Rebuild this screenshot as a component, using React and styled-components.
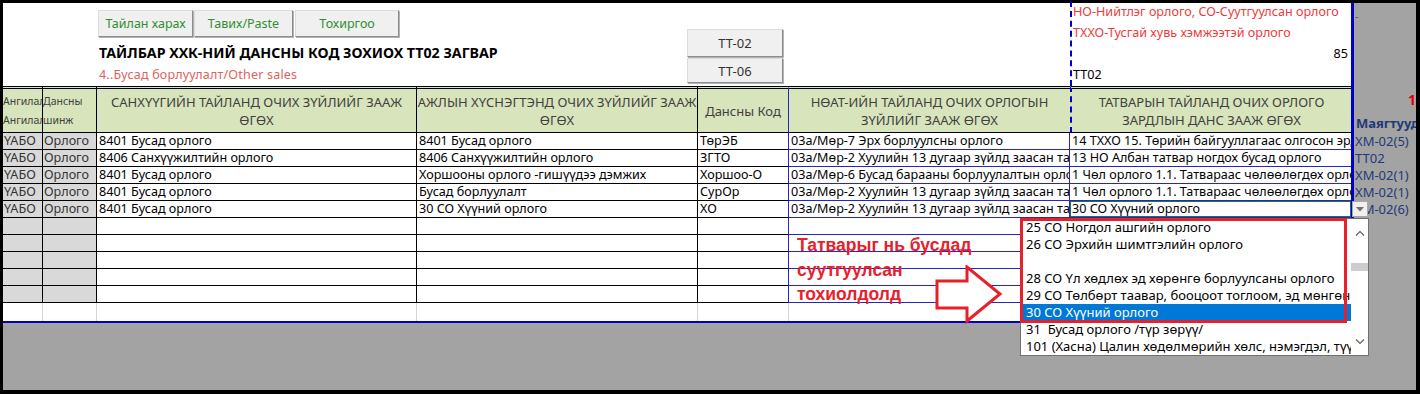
import React from 'react';
import styled, { createGlobalStyle } from 'styled-components';

const COLS = '40px 54px 320px 281px 91px 281px 281px 3px 62px';
const FONT = `"Noto Sans", "Liberation Sans", sans-serif`;
const BLUE = '#0000cd';
const CELL_BLUE = '#2626c8';
const GRAY = '#a3a3a3';
const RED = '#e8202a';
const NAVY = '#1f3a78';

const GlobalStyle = createGlobalStyle`
  html, body {
    margin: 0;
    padding: 0;
    background: #000;
  }
  body {
    font-family: ${FONT};
  }
`;

const Frame = styled.div`
  position: relative;
  width: 1420px;
  height: 394px;
  box-sizing: border-box;
  padding: 3px 4px 4px 3px;
  background: #000;
  overflow: hidden;
`;

const Sheet = styled.div`
  display: flex;
  flex-direction: column;
  height: 100%;
  background: ${GRAY};
`;

const Band = styled.div`
  display: grid;
  grid-template-columns: ${COLS};
  height: ${(p) => p.$h}px;
  background: ${(p) => p.$bg || 'transparent'};
`;

const Filler = styled.div`
  flex: 1;
  background: ${GRAY};
`;

const Span = styled.div`
  grid-column: span ${(p) => p.$span || 1};
`;

const BlueBar = styled.div`
  background: ${BLUE};
`;

const Rule = styled.div`
  grid-column: span 8;
  background: ${BLUE};
`;

/* ---------- top band ---------- */

const TitleCell = styled.div`
  padding-left: 1px;
  white-space: nowrap;
  overflow: visible;
`;

const ButtonBar = styled.div`
  display: flex;
  margin-top: 7px;
`;

const ToolButton = styled.button`
  box-sizing: border-box;
  height: 27px;
  width: ${(p) => p.$w}px;
  margin-left: ${(p) => p.$ml || 0}px;
  padding: 0;
  background: #f0f0f0;
  border: 1px solid;
  border-color: #dcdcdc #8c8c8c #8c8c8c #dcdcdc;
  box-shadow: 1px 1px 0 #b4b4b4;
  color: ${(p) => p.$color || '#333'};
  font-family: ${FONT};
  font-size: 12.5px;
`;

const Title = styled.div`
  margin-top: 7px;
  padding-left: 1px;
  font-size: 14.2px;
  line-height: 18px;
  font-weight: 700;
  color: #000;
`;

const Subtitle = styled.div`
  margin-top: 4px;
  padding-left: 1px;
  font-size: 12.5px;
  letter-spacing: 0.2px;
  line-height: 18px;
  color: #e0625c;
`;

const TemplateCell = styled.div`
  grid-column: span 2;
  display: flex;
  flex-direction: column;
  align-items: flex-end;
  padding: 26px 6px 0 0;
  gap: 1px;
`;

const TemplateButton = styled(ToolButton)`
  width: 96px;
  height: ${(p) => p.$h}px;
  font-size: 13px;
`;

const NoteCell = styled.div`
  border-left: 2px dashed ${BLUE};
  padding: 0 3px 0 1px;
  display: flex;
  flex-direction: column;
  margin-top: -2px;
  font-size: 12.6px;
  line-height: 21px;
  white-space: nowrap;
`;

const NoteLine = styled.div`
  height: 21px;
  color: ${(p) => (p.$red ? '#f03a3a' : '#000')};
  text-align: ${(p) => (p.$right ? 'right' : 'left')};
`;

/* ---------- header band ---------- */

const HeadCell = styled.div`
  box-sizing: border-box;
  background: #d8e4bc;
  border-top: 3px double #000;
  border-bottom: 1px solid #000;
  border-right: ${(p) => p.$right || '1px solid #000'};
  border-left: ${(p) => p.$left || 'none'};
  display: flex;
  align-items: center;
  justify-content: ${(p) => (p.$small ? 'flex-start' : 'center')};
  text-align: ${(p) => (p.$small ? 'left' : 'center')};
  color: #404040;
  font-size: ${(p) => (p.$small ? '10.5px' : '13px')};
  line-height: ${(p) => (p.$small ? '19px' : '18px')};
  padding: ${(p) => (p.$small ? '0' : '0 2px')};
  overflow: hidden;
  white-space: nowrap;
`;

const SideHead = styled.div`
  display: flex;
  flex-direction: column;
  padding-top: 6px;
  white-space: nowrap;
  overflow: hidden;
`;

const PageNo = styled.div`
  align-self: flex-end;
  color: #e00000;
  font-weight: 700;
  font-size: 14px;
  line-height: 16px;
`;

const SideTitle = styled.div`
  margin-top: 7px;
  padding-left: 2px;
  color: ${NAVY};
  font-weight: 700;
  font-size: 13px;
  line-height: 16px;
`;

/* ---------- body rows ---------- */

const Cell = styled.div`
  box-sizing: border-box;
  position: relative;
  overflow: hidden;
  white-space: nowrap;
  font-size: 12.6px;
  line-height: 16px;
  padding: 0 2px;
  color: #000;
  background: #fff;
  border-bottom: 1px solid ${(p) => p.$line || '#000'};
  border-right: ${(p) => (p.$noRight ? 'none' : `1px solid ${p.$rline || p.$line || '#000'}`)};
  box-shadow: ${(p) => (p.$sel ? 'inset 0 0 0 1px #217346' : 'none')};
`;

const ShadeCell = styled(Cell)`
  background: #d9d9d9;
  color: #333;
  padding: 0 1px;
`;

const GridCell = styled.div`
  background: #fff;
  border-right: ${(p) => (p.$grid ? '1px solid #d4d4d4' : 'none')};
`;

const SideCell = styled.div`
  background: ${GRAY};
  color: ${NAVY};
  font-size: 13px;
  line-height: 16px;
  padding-left: 1px;
  white-space: nowrap;
  overflow: hidden;
`;

const SideDash = styled.div`
  color: #555;
  font-size: 10px;
  line-height: 10px;
  padding-top: 8px;
`;

/* ---------- overlays ---------- */

const Callout = styled.div`
  position: absolute;
  left: 797px;
  top: 233px;
  color: ${RED};
  font-family: "Liberation Sans", Arial, sans-serif;
  font-weight: 700;
  font-size: 17.5px;
  line-height: 24.5px;
  white-space: nowrap;
`;

const ArrowSvg = styled.svg`
  position: absolute;
  left: 935px;
  top: 265px;
`;

const Dropdown = styled.div`
  position: absolute;
  left: 1020px;
  top: 218px;
  width: 349px;
  height: 138px;
  box-sizing: border-box;
  border: 1px solid #707070;
  background: #fff;
  display: flex;
`;

const OptionList = styled.ul`
  list-style: none;
  margin: 0;
  padding: 0;
  flex: 1;
  overflow: hidden;
`;

const Option = styled.li`
  height: 17px;
  line-height: 17px;
  padding-left: 5px;
  font-size: 13px;
  white-space: pre;
  overflow: hidden;
  background: ${(p) => (p.$sel ? '#0078d7' : 'transparent')};
  color: ${(p) => (p.$sel ? '#fff' : '#000')};
`;

const ScrollBar = styled.div`
  width: 17px;
  display: flex;
  flex-direction: column;
  align-items: center;
  background: #fff;
`;

const ScrollArrow = styled.div`
  height: ${(p) => p.$h}px;
  display: flex;
  align-items: center;
  justify-content: center;
`;

const Thumb = styled.div`
  width: 17px;
  height: 8px;
  margin-top: 16px;
  background: #cdcdcd;
`;

const Track = styled.div`
  flex: 1;
`;

const Marker = styled.div`
  position: absolute;
  left: 1020px;
  top: 218px;
  width: 327px;
  height: 105px;
  box-sizing: border-box;
  border: 3px solid ${RED};
`;

const DropButton = styled.div`
  position: absolute;
  left: 1352px;
  top: 201px;
  width: 16px;
  height: 16px;
  box-sizing: border-box;
  background: #f0f0f0;
  border: 1px solid #a8a8a8;
  display: flex;
  align-items: center;
  justify-content: center;
`;

const RESIDENT = '03а/Мөр-2 Хуулийн 13 дугаар зүйлд заасан татвар ногдох орлого';
const EXEMPT = '1 Чөл орлого 1.1. Татвараас чөлөөлөгдөх орлого';

const rows = [
  {
    c: '8401 Бусад орлого',
    d: '8401 Бусад орлого',
    e: 'ТөрЭБ',
    f: '03а/Мөр-7 Эрх борлуулсны орлого',
    g: '14 ТХХО 15. Төрийн байгууллагаас олгосон эрдэм шинжилгээний шагнал',
    side: 'ХМ-02(5)',
  },
  {
    c: '8406 Санхүүжилтийн орлого',
    d: '8406 Санхүүжилтийн орлого',
    e: 'ЗГТО',
    f: RESIDENT,
    g: '13 НО Албан татвар ногдох бусад орлого',
    side: 'ТТ02',
  },
  {
    c: '8401 Бусад орлого',
    d: 'Хоршооны орлого -гишүүдээ дэмжих',
    e: 'Хоршоо-О',
    f: '03а/Мөр-6 Бусад барааны борлуулалтын орлого',
    g: EXEMPT,
    side: 'ХМ-02(1)',
  },
  {
    c: '8401 Бусад орлого',
    d: 'Бусад борлуулалт',
    e: 'СурОр',
    f: RESIDENT,
    g: EXEMPT,
    side: 'ХМ-02(1)',
  },
  {
    c: '8401 Бусад орлого',
    d: '30 СО Хүүний орлого',
    e: 'ХО',
    f: RESIDENT,
    g: '30 СО Хүүний орлого',
    side: 'ХМ-02(6)',
    selected: true,
  },
];

const options = [
  '25 СО Ногдол ашгийн орлого',
  '26 СО Эрхийн шимтгэлийн орлого',
  '',
  '28 СО Үл хөдлөх эд хөрөнгө борлуулсаны орлого',
  '29 СО Төлбөрт таавар, бооцоот тоглоом, эд мөнгөний хонжвор',
  '30 СО Хүүний орлого',
  '31  Бусад орлого /түр зөрүү/',
  '101 (Хасна) Цалин хөдөлмөрийн хөлс, нэмэгдэл, түүнтэй адилтгах орлого',
];

const Chevron = ({ up }) => (
  <svg width="10" height="6" viewBox="0 0 10 6">
    <polyline
      points={up ? '1,5.5 5,1.5 9,5.5' : '1,0.5 5,4.5 9,0.5'}
      fill="none"
      stroke="#606060"
      strokeWidth="1.2"
    />
  </svg>
);

const DataRow = ({ row }) => (
  <Band $h={17}>
    <ShadeCell>{row ? 'ҮАБО' : ''}</ShadeCell>
    <ShadeCell>{row ? 'Орлого' : ''}</ShadeCell>
    <Cell>{row?.c}</Cell>
    <Cell>{row?.d}</Cell>
    <Cell $rline={CELL_BLUE}>{row?.e}</Cell>
    <Cell $line={CELL_BLUE}>{row?.f}</Cell>
    <Cell $line={CELL_BLUE} $noRight $sel={row?.selected}>
      {row?.g}
    </Cell>
    <BlueBar />
    <SideCell>{row?.side}</SideCell>
  </Band>
);

const App = () => {
  return (
    <>
      <GlobalStyle />
      <Frame>
        <Sheet>
          <Band $h={83} $bg="#fff">
            <Span $span={2} />
            <TitleCell>
              <ButtonBar>
                <ToolButton $w={95} $color="#2f8f2f">
                  Тайлан харах
                </ToolButton>
                <ToolButton $w={99} $ml={1} $color="#2f8f2f">
                  Тавих/Paste
                </ToolButton>
                <ToolButton $w={104} $ml={2} $color="#2f8f2f">
                  Тохиргоо
                </ToolButton>
              </ButtonBar>
              <Title>ТАЙЛБАР ХХК-НИЙ ДАНСНЫ КОД ЗОХИОХ ТТ02 ЗАГВАР</Title>
              <Subtitle>4..Бусад борлуулалт/Other sales</Subtitle>
            </TitleCell>
            <TemplateCell>
              <TemplateButton $h={28}>TT-02</TemplateButton>
              <TemplateButton $h={25}>TT-06</TemplateButton>
            </TemplateCell>
            <Span />
            <NoteCell>
              <NoteLine $red>НО-Нийтлэг орлого, СО-Суутгуулсан орлого</NoteLine>
              <NoteLine $red>ТХХО-Тусгай хувь хэмжээтэй орлого</NoteLine>
              <NoteLine $right>85</NoteLine>
              <NoteLine>TT02</NoteLine>
            </NoteCell>
            <BlueBar />
            <SideCell>
              <SideDash>-</SideDash>
            </SideCell>
          </Band>

          <Band $h={47}>
            <HeadCell $small>
              Ангилал
              <br />
              Ангилал
            </HeadCell>
            <HeadCell $small>
              Дансны
              <br />
              шинж
            </HeadCell>
            <HeadCell>
              САНХҮҮГИЙН ТАЙЛАНД ОЧИХ ЗҮЙЛИЙГ ЗААЖ
              <br />
              ӨГӨХ
            </HeadCell>
            <HeadCell>
              АЖЛЫН ХҮСНЭГТЭНД ОЧИХ ЗҮЙЛИЙГ ЗААЖ
              <br />
              ӨГӨХ
            </HeadCell>
            <HeadCell $right={`1px solid ${CELL_BLUE}`}>Дансны Код</HeadCell>
            <HeadCell $right="none">
              НӨАТ-ИЙН ТАЙЛАНД ОЧИХ ОРЛОГЫН
              <br />
              ЗҮЙЛИЙГ ЗААЖ ӨГӨХ
            </HeadCell>
            <HeadCell $right="none" $left={`2px dashed ${BLUE}`}>
              ТАТВАРЫН ТАЙЛАНД ОЧИХ ОРЛОГО
              <br />
              ЗАРДЛЫН ДАНС ЗААЖ ӨГӨХ
            </HeadCell>
            <BlueBar />
            <SideHead>
              <PageNo>1</PageNo>
              <SideTitle>Маягтууд</SideTitle>
            </SideHead>
          </Band>

          {rows.map((row, idx) => (
            <DataRow key={idx} row={row} />
          ))}
          {[0, 1, 2, 3, 4].map((idx) => (
            <DataRow key={`empty-${idx}`} />
          ))}

          <Band $h={18}>
            <GridCell $grid />
            <GridCell $grid />
            <GridCell $grid />
            <GridCell $grid />
            <GridCell $grid />
            <GridCell />
            <GridCell />
            <BlueBar />
            <SideCell />
          </Band>

          <Band $h={2}>
            <Rule />
            <SideCell />
          </Band>
          <Filler />
        </Sheet>

        <Callout>
          Татварыг нь бусдад
          <br />
          суутгуулсан
          <br />
          тохиолдолд
        </Callout>

        <ArrowSvg width="70" height="60" viewBox="0 0 70 60">
          <polygon
            points="2,16 32,16 32,2 65,29 32,56 32,43 2,43"
            fill="#fff"
            stroke={RED}
            strokeWidth="3"
          />
        </ArrowSvg>

        <DropButton>
          <svg width="8" height="5" viewBox="0 0 8 5">
            <polygon points="0,0 8,0 4,4.5" fill="#6e6e6e" />
          </svg>
        </DropButton>

        <Dropdown>
          <OptionList>
            {options.map((item, idx) => (
              <Option key={idx} $sel={idx === 5}>
                {item}
              </Option>
            ))}
          </OptionList>
          <ScrollBar>
            <ScrollArrow $h={28}>
              <Chevron up />
            </ScrollArrow>
            <Thumb />
            <Track />
            <ScrollArrow $h={26}>
              <Chevron />
            </ScrollArrow>
          </ScrollBar>
        </Dropdown>
        <Marker />
      </Frame>
    </>
  );
};

export default App;
